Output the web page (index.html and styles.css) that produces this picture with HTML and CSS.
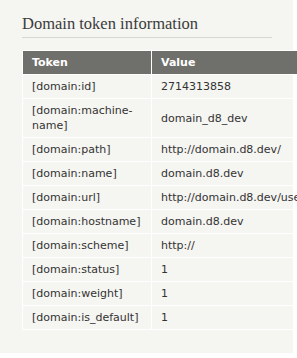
FILE: index.html
```html
<!DOCTYPE html>
<html lang="en">
<head>
  <meta charset="UTF-8">
  <title>Domain token information</title>
  <link rel="stylesheet" href="styles.css">
</head>
<body>
  <div class="panel">
    <h2 class="panel-title">Domain token information</h2>
    <table class="tokens">
      <thead>
        <tr><th>Token</th><th>Value</th></tr>
      </thead>
      <tbody>
        <tr><td>[domain:id]</td><td>2714313858</td></tr>
        <tr><td>[domain:machine-name]</td><td>domain_d8_dev</td></tr>
        <tr><td>[domain:path]</td><td>http://domain.d8.dev/</td></tr>
        <tr><td>[domain:name]</td><td>domain.d8.dev</td></tr>
        <tr><td>[domain:url]</td><td>http://domain.d8.dev/user</td></tr>
        <tr><td>[domain:hostname]</td><td>domain.d8.dev</td></tr>
        <tr><td>[domain:scheme]</td><td>http://</td></tr>
        <tr><td>[domain:status]</td><td>1</td></tr>
        <tr><td>[domain:weight]</td><td>1</td></tr>
        <tr><td>[domain:is_default]</td><td>1</td></tr>
      </tbody>
    </table>
  </div>
</body>
</html>
```

FILE: styles.css
```css
* {
  margin: 0;
  padding: 0;
  box-sizing: border-box;
}

body {
  background-color: #fff;
  font-family: 'DejaVu Sans', Verdana, sans-serif;
  color: #333;
  overflow: hidden;
}

.panel {
  width: 293px;
  height: 353px;
  background-color: #f5f5f1;
  padding: 14px 0 0 22px;
}

.panel-title {
  font-family: 'Liberation Serif', Georgia, serif;
  font-weight: normal;
  font-size: 16.5px;
  line-height: 20px;
  color: #3b3b3b;
  width: 250px;
  padding-bottom: 3px;
  border-bottom: 1px solid #d6d6d2;
  margin-bottom: 12px;
}

.tokens {
  border-collapse: collapse;
  width: 300px;
  font-size: 11px;
}

.tokens th,
.tokens td {
  border: 1px solid #fff;
  text-align: left;
  padding: 4px 9px;
  vertical-align: middle;
  white-space: nowrap;
}

.tokens th {
  background-color: #6f6f6b;
  color: #fff;
  font-weight: bold;
  height: 24px;
}

.tokens td {
  height: 24px;
  line-height: 15px;
}

.tokens td:first-child {
  width: 129px;
  white-space: normal;
}

.tokens td:last-child {
  max-width: 150px;
  overflow: hidden;
}
```
